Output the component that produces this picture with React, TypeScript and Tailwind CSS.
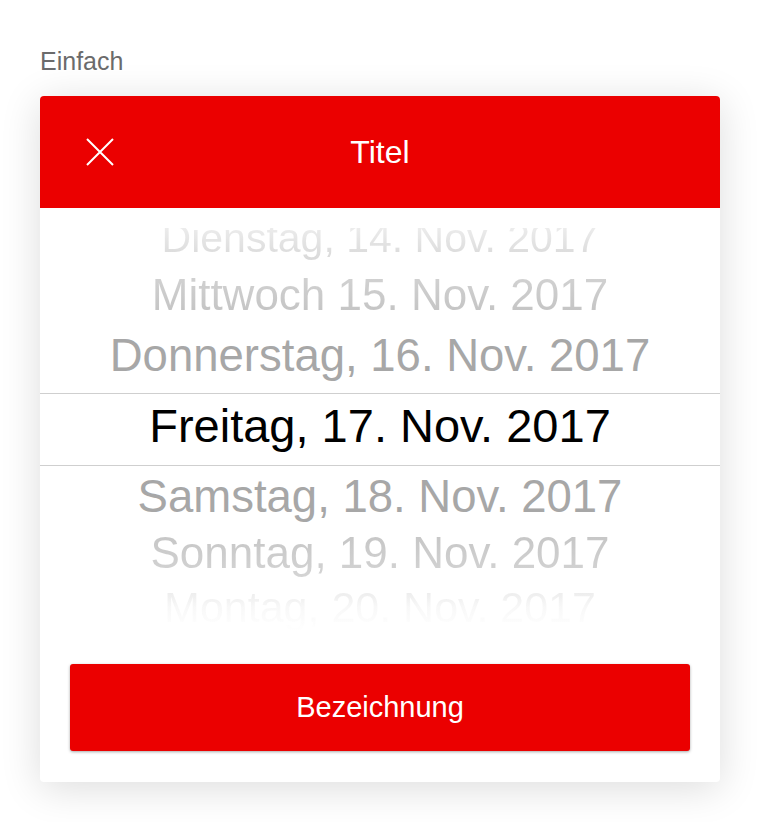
import React from "react"

const font = { fontFamily: '"Liberation Sans", Arial, Helvetica, sans-serif' }

function CloseIcon() {
  return (
    <svg width="28" height="28" viewBox="0 0 28 28" fill="none">
      <path d="M1 1 27 27M27 1 1 27" stroke="white" strokeWidth="2" />
    </svg>
  )
}

export default function App() {
  return (
    <div className="min-h-screen bg-white px-10 pt-[46px]" style={font}>
      <p className="text-[25px] leading-[30px] text-[#6b6b6b]">Einfach</p>

      {/* Card */}
      <div className="mt-[20px] w-[680px] overflow-hidden rounded bg-white shadow-[0_6px_40px_rgba(0,0,0,0.14)]">
        {/* Header */}
        <header className="grid h-[112px] grid-cols-[1fr_auto_1fr] items-center bg-[#eb0000] px-[46px] text-white">
          <div className="flex">
            <CloseIcon />
          </div>
          <h1 className="text-[32px] leading-none">Titel</h1>
          <div />
        </header>

        {/* Date wheel */}
        <div className="pt-[20px]">
          <div className="h-[406px] overflow-hidden text-center">
            <div className="h-[38px] text-[41px] leading-[20px]">
              <span className="bg-linear-to-b from-[#f4f4f4] to-[#d8d8d8] bg-clip-text text-transparent">
                Dienstag, 14. Nov. 2017
              </span>
            </div>
            <div className="h-[60px] text-[44px] leading-[58px]">
              <span className="bg-linear-to-b from-[#d4d4d4] to-[#c2c2c2] bg-clip-text text-transparent">
                Mittwoch 15. Nov. 2017
              </span>
            </div>
            <div className="h-[67px] text-[45.5px] leading-[60px] text-[#a7a7a7]">
              Donnerstag, 16. Nov. 2017
            </div>
            <div className="h-[73px] border-y border-[#cfcfcf] text-[47px] leading-[64px] text-black">
              Freitag, 17. Nov. 2017
            </div>
            <div className="h-[59px] text-[45.5px] leading-[62px] text-[#a7a7a7]">
              Samstag, 18. Nov. 2017
            </div>
            <div className="h-[55px] text-[44px] leading-[56px]">
              <span className="bg-linear-to-b from-[#c4c4c4] to-[#d4d4d4] bg-clip-text text-transparent">
                Sonntag, 19. Nov. 2017
              </span>
            </div>
            <div className="h-[54px] text-[43px] leading-[54px]">
              <span className="bg-linear-to-b from-[#e6e6e6] via-[#f8f8f8] via-50% to-white bg-clip-text text-transparent">
                Montag, 20. Nov. 2017
              </span>
            </div>
          </div>
        </div>

        {/* Action */}
        <div className="px-[30px] pt-[30px] pb-[31px]">
          <button className="flex h-[87px] w-full items-center justify-center rounded-[3px] bg-[#eb0000] text-[29px] text-white shadow-[0_1px_3px_rgba(0,0,0,0.35)]">
            Bezeichnung
          </button>
        </div>
      </div>
    </div>
  )
}
